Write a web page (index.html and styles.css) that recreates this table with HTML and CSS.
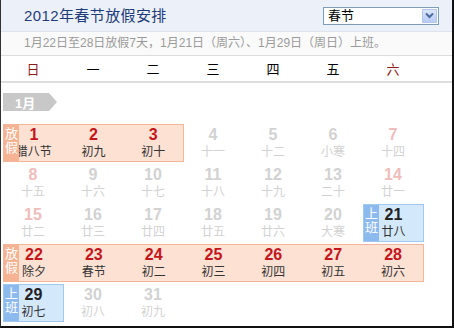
FILE: index.html
```html
<!DOCTYPE html>
<html>
<head>
<meta charset="utf-8">
<link rel="stylesheet" href="styles.css">
</head>
<body>
<div class="cal">
  <div class="head">
    <h1 class="title">2012年春节放假安排</h1>
    <div class="select">
      <span class="sel-text">春节</span>
      <span class="sel-btn"><svg width="9" height="7" viewBox="0 0 9 7"><path d="M1 1.5 L4.5 5 L8 1.5" fill="none" stroke="#4d6a9c" stroke-width="2"/></svg></span>
    </div>
  </div>
  <div class="sub">1月22日至28日放假7天，1月21日（周六）、1月29日（周日）上班。</div>
  <div class="week">
    <span class="wd we">日</span><span class="wd">一</span><span class="wd">二</span><span class="wd">三</span><span class="wd">四</span><span class="wd">五</span><span class="wd we">六</span>
  </div>
  <div class="month"><span class="tag">1月</span></div>
  <div class="grid">
    <div class="row">
      <div class="band off span3">
        <span class="label">放假</span>
        <div class="cell"><b class="num">1</b><span class="lunar">腊八节</span></div>
        <div class="cell"><b class="num">2</b><span class="lunar">初九</span></div>
        <div class="cell"><b class="num">3</b><span class="lunar">初十</span></div>
      </div>
      <div class="cell past"><b class="num">4</b><span class="lunar">十一</span></div>
      <div class="cell past"><b class="num">5</b><span class="lunar">十二</span></div>
      <div class="cell past"><b class="num">6</b><span class="lunar">小寒</span></div>
      <div class="cell past wkend"><b class="num">7</b><span class="lunar">十四</span></div>
    </div>
    <div class="row">
      <div class="cell past wkend"><b class="num">8</b><span class="lunar">十五</span></div>
      <div class="cell past"><b class="num">9</b><span class="lunar">十六</span></div>
      <div class="cell past"><b class="num">10</b><span class="lunar">十七</span></div>
      <div class="cell past"><b class="num">11</b><span class="lunar">十八</span></div>
      <div class="cell past"><b class="num">12</b><span class="lunar">十九</span></div>
      <div class="cell past"><b class="num">13</b><span class="lunar">二十</span></div>
      <div class="cell past wkend"><b class="num">14</b><span class="lunar">廿一</span></div>
    </div>
    <div class="row">
      <div class="cell past wkend"><b class="num">15</b><span class="lunar">廿二</span></div>
      <div class="cell past"><b class="num">16</b><span class="lunar">廿三</span></div>
      <div class="cell past"><b class="num">17</b><span class="lunar">廿四</span></div>
      <div class="cell past"><b class="num">18</b><span class="lunar">廿五</span></div>
      <div class="cell past"><b class="num">19</b><span class="lunar">廿六</span></div>
      <div class="cell past"><b class="num">20</b><span class="lunar">大寒</span></div>
      <div class="band work span1">
        <span class="label">上班</span>
        <div class="cell"><b class="num">21</b><span class="lunar">廿八</span></div>
      </div>
    </div>
    <div class="row">
      <div class="band off span7">
        <span class="label">放假</span>
        <div class="cell"><b class="num">22</b><span class="lunar">除夕</span></div>
        <div class="cell"><b class="num">23</b><span class="lunar">春节</span></div>
        <div class="cell"><b class="num">24</b><span class="lunar">初二</span></div>
        <div class="cell"><b class="num">25</b><span class="lunar">初三</span></div>
        <div class="cell"><b class="num">26</b><span class="lunar">初四</span></div>
        <div class="cell"><b class="num">27</b><span class="lunar">初五</span></div>
        <div class="cell"><b class="num">28</b><span class="lunar">初六</span></div>
      </div>
    </div>
    <div class="row">
      <div class="band work span1">
        <span class="label">上班</span>
        <div class="cell"><b class="num">29</b><span class="lunar">初七</span></div>
      </div>
      <div class="cell past"><b class="num">30</b><span class="lunar">初八</span></div>
      <div class="cell past"><b class="num">31</b><span class="lunar">初九</span></div>
    </div>
  </div>
</div>
</body>
</html>
```
FILE: styles.css
```css
html, body {
  margin: 0;
  padding: 0;
  background: #fff;
}
.cal {
  box-sizing: border-box;
  width: 454px;
  height: 328px;
  border-left: 1px solid #333;
  border-right: 2px solid #111;
  border-bottom: 2px solid #111;
  font-family: "Liberation Sans", "Noto Sans CJK SC", sans-serif;
  overflow: hidden;
}
.head {
  height: 31px;
  background: #ebf0f9;
  border-bottom: 1px solid #dde4ee;
  display: flex;
  align-items: center;
  justify-content: space-between;
  padding: 0 13px 0 23px;
}
.title {
  margin: 0;
  font-size: 15px;
  font-weight: normal;
  color: #1f3c7a;
  letter-spacing: 0.4px;
  line-height: 20px;
}
.select {
  box-sizing: border-box;
  width: 116px;
  height: 18px;
  border: 1px solid #7f9db9;
  background: #fff;
  display: flex;
  align-items: center;
  justify-content: space-between;
  padding: 0 1px 0 4px;
}
.sel-text {
  font-size: 13px;
  color: #000;
  line-height: 16px;
}
.sel-btn {
  width: 15px;
  height: 14px;
  background: linear-gradient(#dbe6fd, #b8cbf5);
  border: 1px solid #b1c6ee;
  box-sizing: border-box;
  display: flex;
  align-items: center;
  justify-content: center;
}
.sub {
  height: 23px;
  background: #fafafa;
  border-bottom: 1px solid #dcdcdc;
  font-size: 12px;
  color: #9a9a9a;
  line-height: 23px;
  padding-left: 23px;
}
.week {
  display: grid;
  grid-template-columns: repeat(7, 60px);
  padding-left: 2px;
  height: 25px;
  border-bottom: 2px solid #dedede;
  align-items: center;
}
.wd {
  text-align: center;
  font-size: 13px;
  color: #000;
}
.wd.we {
  color: #8e1b1b;
}
.month {
  padding: 10px 0 0 2px;
  height: 18px;
}
.tag {
  display: flex;
  align-items: center;
  width: 54px;
  height: 18px;
  background: #c8c8c8;
  color: #fff;
  font-weight: bold;
  font-size: 13px;
  padding-left: 12px;
  box-sizing: border-box;
  clip-path: polygon(0 0, 46px 0, 54px 50%, 46px 100%, 0 100%);
}
.grid {
  margin-top: 13px;
  padding-left: 2px;
  display: flex;
  flex-direction: column;
  gap: 2px;
}
.row {
  display: grid;
  grid-template-columns: repeat(7, 60px);
  height: 38px;
}
.cell {
  display: flex;
  flex-direction: column;
  align-items: center;
  padding-top: 2px;
}
.num {
  font-size: 16px;
  line-height: 18px;
  font-weight: bold;
  color: #333;
}
.lunar {
  font-size: 12px;
  line-height: 16px;
  color: #333;
}
.past .num, .past .lunar {
  color: #d2d2d2;
}
.past.wkend .num {
  color: #f0bcbc;
}
.band {
  position: relative;
  display: grid;
  box-sizing: border-box;
  grid-auto-flow: column;
  grid-auto-columns: 1fr;
}
.band .cell {
  padding-top: 1px;
}
.span1 { grid-column: span 1; width: 61px; }
.span3 { grid-column: span 3; width: 181px; }
.span7 { grid-column: span 7; width: 421px; }
.off {
  background: #fde1d3;
  border: 1px solid #f3b69c;
}
.off .num {
  color: #c3161c;
}
.work {
  background: #d4e8fc;
  border: 1px solid #a3c8ee;
}
.work .num {
  color: #222;
}
.label {
  position: absolute;
  left: 0;
  top: 0;
  bottom: 0;
  width: 15px;
  color: #fff;
  font-size: 13px;
  line-height: 14px;
  text-align: center;
  display: flex;
  align-items: center;
  justify-content: center;
  padding-bottom: 4px;
  box-sizing: border-box;
}
.off .label {
  background: #f6b393;
}
.work .label {
  background: #8cb9ee;
}
```
